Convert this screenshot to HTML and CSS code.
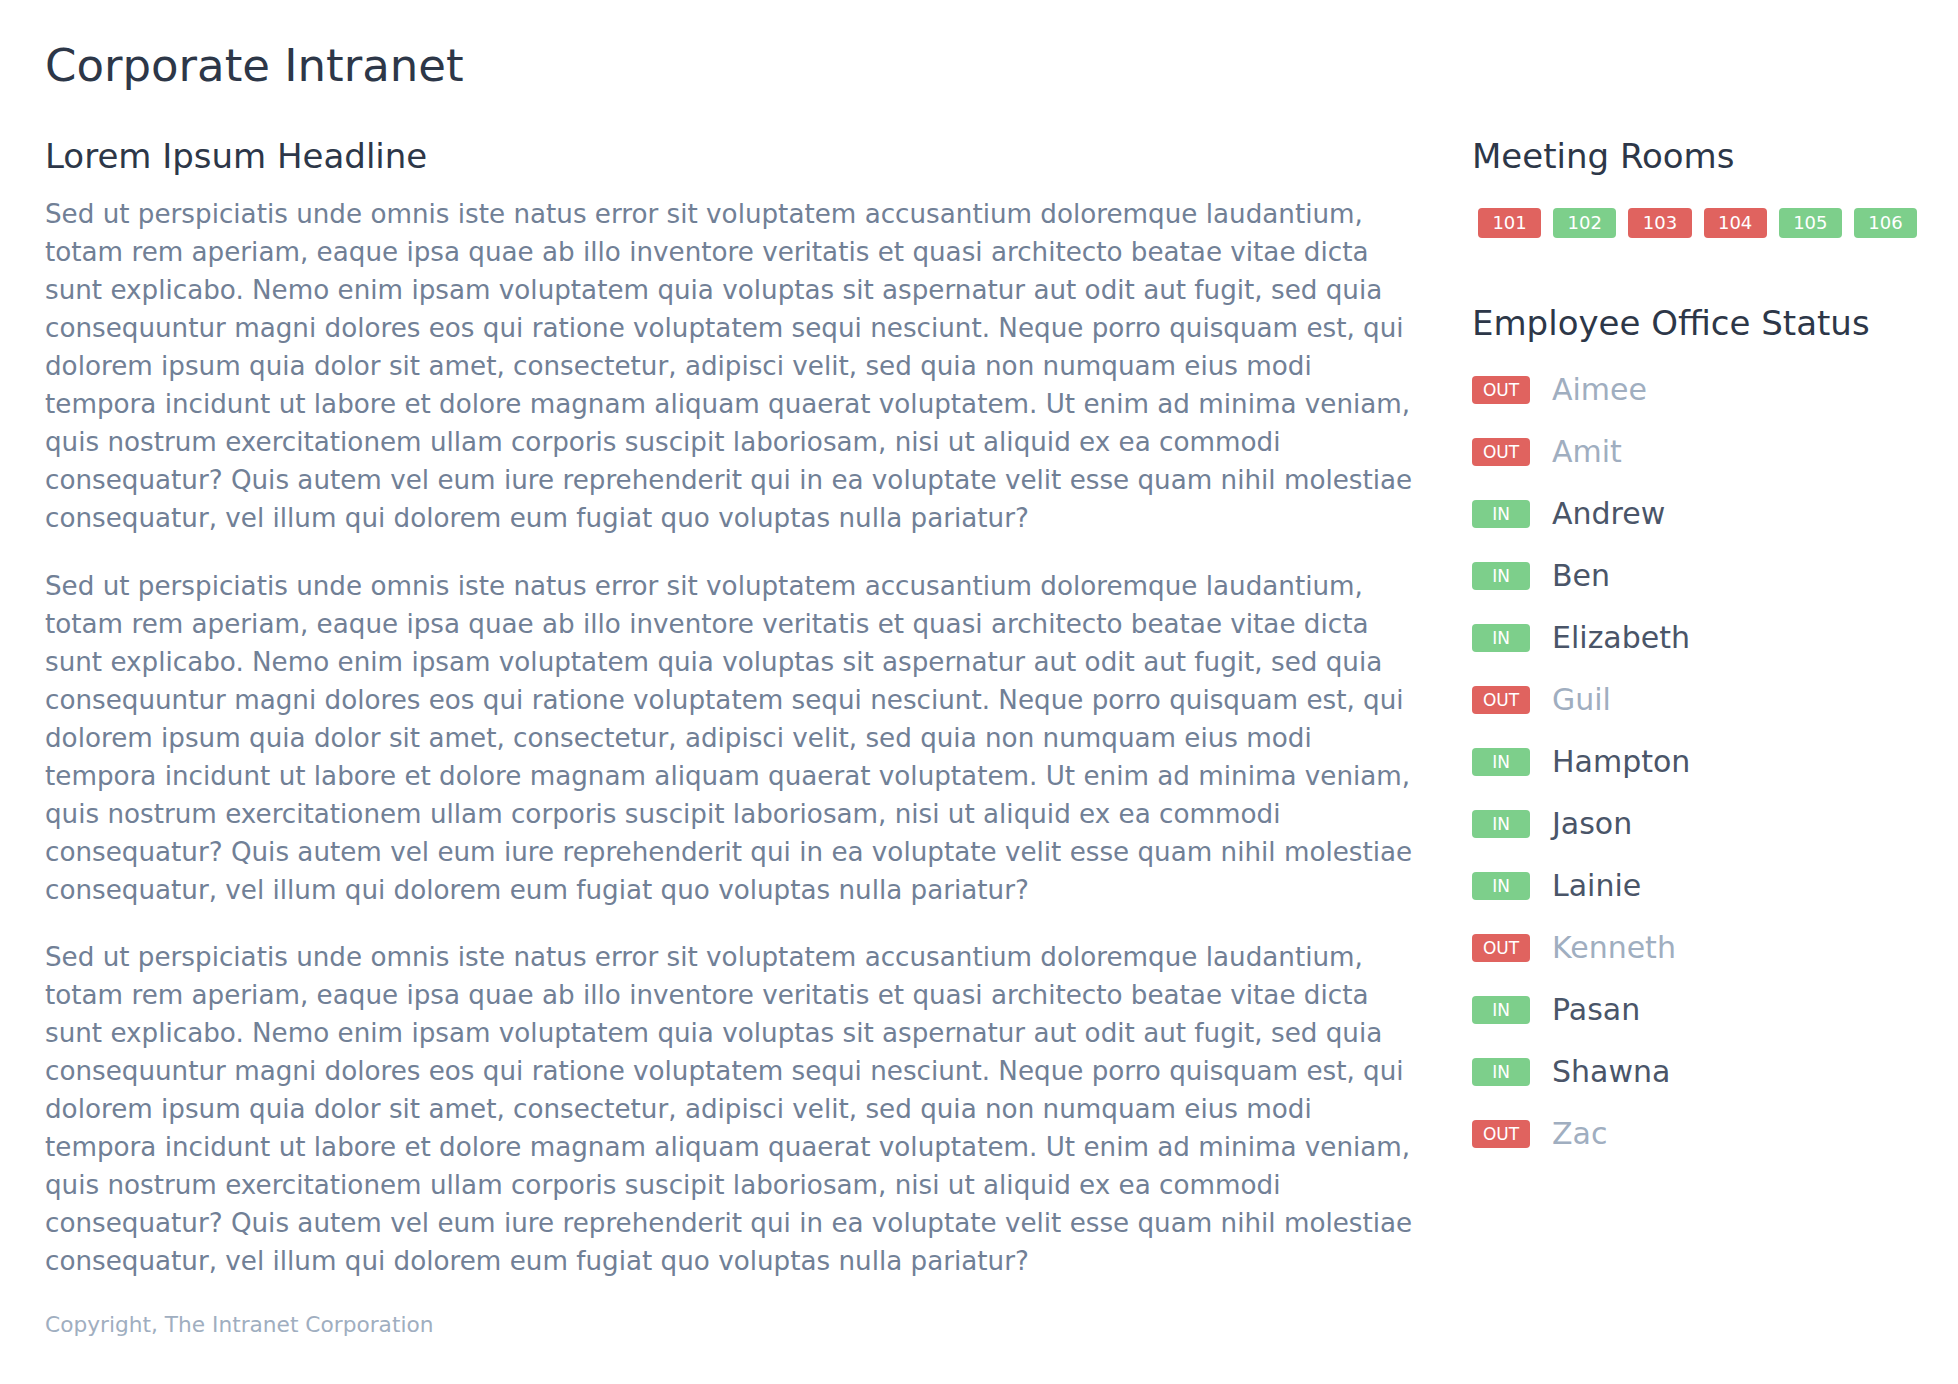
FILE: index.html
```html
<!DOCTYPE html>
<html lang="en">
<head>
<meta charset="utf-8">
<title>Corporate Intranet</title>
<link rel="stylesheet" href="styles.css">
</head>
<body>
<header class="site-header">
  <h1 class="site-title">Corporate Intranet</h1>
</header>
<div class="layout">
  <main class="main">
    <h2 class="section-title">Lorem Ipsum Headline</h2>
    <p class="copy">Sed ut perspiciatis unde omnis iste natus error sit voluptatem accusantium doloremque laudantium, totam rem aperiam, eaque ipsa quae ab illo inventore veritatis et quasi architecto beatae vitae dicta sunt explicabo. Nemo enim ipsam voluptatem quia voluptas sit aspernatur aut odit aut fugit, sed quia consequuntur magni dolores eos qui ratione voluptatem sequi nesciunt. Neque porro quisquam est, qui dolorem ipsum quia dolor sit amet, consectetur, adipisci velit, sed quia non numquam eius modi tempora incidunt ut labore et dolore magnam aliquam quaerat voluptatem. Ut enim ad minima veniam, quis nostrum exercitationem ullam corporis suscipit laboriosam, nisi ut aliquid ex ea commodi consequatur? Quis autem vel eum iure reprehenderit qui in ea voluptate velit esse quam nihil molestiae consequatur, vel illum qui dolorem eum fugiat quo voluptas nulla pariatur?</p>
    <p class="copy">Sed ut perspiciatis unde omnis iste natus error sit voluptatem accusantium doloremque laudantium, totam rem aperiam, eaque ipsa quae ab illo inventore veritatis et quasi architecto beatae vitae dicta sunt explicabo. Nemo enim ipsam voluptatem quia voluptas sit aspernatur aut odit aut fugit, sed quia consequuntur magni dolores eos qui ratione voluptatem sequi nesciunt. Neque porro quisquam est, qui dolorem ipsum quia dolor sit amet, consectetur, adipisci velit, sed quia non numquam eius modi tempora incidunt ut labore et dolore magnam aliquam quaerat voluptatem. Ut enim ad minima veniam, quis nostrum exercitationem ullam corporis suscipit laboriosam, nisi ut aliquid ex ea commodi consequatur? Quis autem vel eum iure reprehenderit qui in ea voluptate velit esse quam nihil molestiae consequatur, vel illum qui dolorem eum fugiat quo voluptas nulla pariatur?</p>
    <p class="copy">Sed ut perspiciatis unde omnis iste natus error sit voluptatem accusantium doloremque laudantium, totam rem aperiam, eaque ipsa quae ab illo inventore veritatis et quasi architecto beatae vitae dicta sunt explicabo. Nemo enim ipsam voluptatem quia voluptas sit aspernatur aut odit aut fugit, sed quia consequuntur magni dolores eos qui ratione voluptatem sequi nesciunt. Neque porro quisquam est, qui dolorem ipsum quia dolor sit amet, consectetur, adipisci velit, sed quia non numquam eius modi tempora incidunt ut labore et dolore magnam aliquam quaerat voluptatem. Ut enim ad minima veniam, quis nostrum exercitationem ullam corporis suscipit laboriosam, nisi ut aliquid ex ea commodi consequatur? Quis autem vel eum iure reprehenderit qui in ea voluptate velit esse quam nihil molestiae consequatur, vel illum qui dolorem eum fugiat quo voluptas nulla pariatur?</p>
    <footer class="footer">Copyright, The Intranet Corporation</footer>
  </main>
  <aside class="sidebar">
    <h2 class="section-title">Meeting Rooms</h2>
    <div class="rooms">
      <span class="room busy">101</span>
      <span class="room free">102</span>
      <span class="room busy">103</span>
      <span class="room busy">104</span>
      <span class="room free">105</span>
      <span class="room free">106</span>
    </div>
    <h2 class="section-title status-title">Employee Office Status</h2>
    <ul class="staff">
      <li class="person out"><span class="tag">OUT</span><span class="name">Aimee</span></li>
      <li class="person out"><span class="tag">OUT</span><span class="name">Amit</span></li>
      <li class="person in"><span class="tag">IN</span><span class="name">Andrew</span></li>
      <li class="person in"><span class="tag">IN</span><span class="name">Ben</span></li>
      <li class="person in"><span class="tag">IN</span><span class="name">Elizabeth</span></li>
      <li class="person out"><span class="tag">OUT</span><span class="name">Guil</span></li>
      <li class="person in"><span class="tag">IN</span><span class="name">Hampton</span></li>
      <li class="person in"><span class="tag">IN</span><span class="name">Jason</span></li>
      <li class="person in"><span class="tag">IN</span><span class="name">Lainie</span></li>
      <li class="person out"><span class="tag">OUT</span><span class="name">Kenneth</span></li>
      <li class="person in"><span class="tag">IN</span><span class="name">Pasan</span></li>
      <li class="person in"><span class="tag">IN</span><span class="name">Shawna</span></li>
      <li class="person out"><span class="tag">OUT</span><span class="name">Zac</span></li>
    </ul>
  </aside>
</div>
</body>
</html>
```
FILE: styles.css
```css
* { box-sizing: border-box; }

html, body {
  margin: 0;
  background: #ffffff;
}

body {
  font-family: "DejaVu Sans", "Noto Sans", sans-serif;
  color: #2d3748;
  padding: 38px 34px 40px 45px;
}

.site-title {
  margin: 0;
  font-size: 45px;
  line-height: 56px;
  font-weight: 400;
  color: #2d3748;
}

.layout {
  display: grid;
  grid-template-columns: minmax(0, 1fr) 452px;
  column-gap: 52px;
  margin-top: 40px;
  align-items: start;
}

.section-title {
  margin: 0;
  font-size: 34px;
  line-height: 44px;
  font-weight: 400;
  color: #2d3748;
}

.main .section-title {
  margin-bottom: 17px;
}

.copy {
  margin: 0 0 29.5px;
  font-size: 26.2px;
  line-height: 38px;
  color: #718096;
}

.footer {
  margin-top: 1px;
  font-size: 21.7px;
  line-height: 30px;
  color: #a0aec0;
}

.rooms {
  display: flex;
  gap: 12px;
  margin: 30px 0 0 6px;
}

.room {
  display: inline-block;
  width: 63.2px;
  height: 30px;
  line-height: 30px;
  text-align: center;
  font-size: 18px;
  color: #ffffff;
  border-radius: 4px;
}

.busy { background: #e0635f; }
.free { background: #7dcf8b; }

.status-title {
  margin-top: 63px;
}

.staff {
  list-style: none;
  margin: 14px 0 0;
  padding: 0;
}

.person {
  display: flex;
  align-items: center;
  gap: 22px;
  height: 62px;
}

.tag {
  display: inline-block;
  width: 58px;
  height: 28px;
  line-height: 28px;
  text-align: center;
  font-size: 17px;
  color: #ffffff;
  border-radius: 4px;
}

.name {
  font-size: 30px;
  line-height: 40px;
}

.person.out .tag { background: #e0635f; }
.person.in .tag { background: #7dcf8b; }
.person.out .name { color: #a0aec0; }
.person.in .name { color: #4a5568; }
```
